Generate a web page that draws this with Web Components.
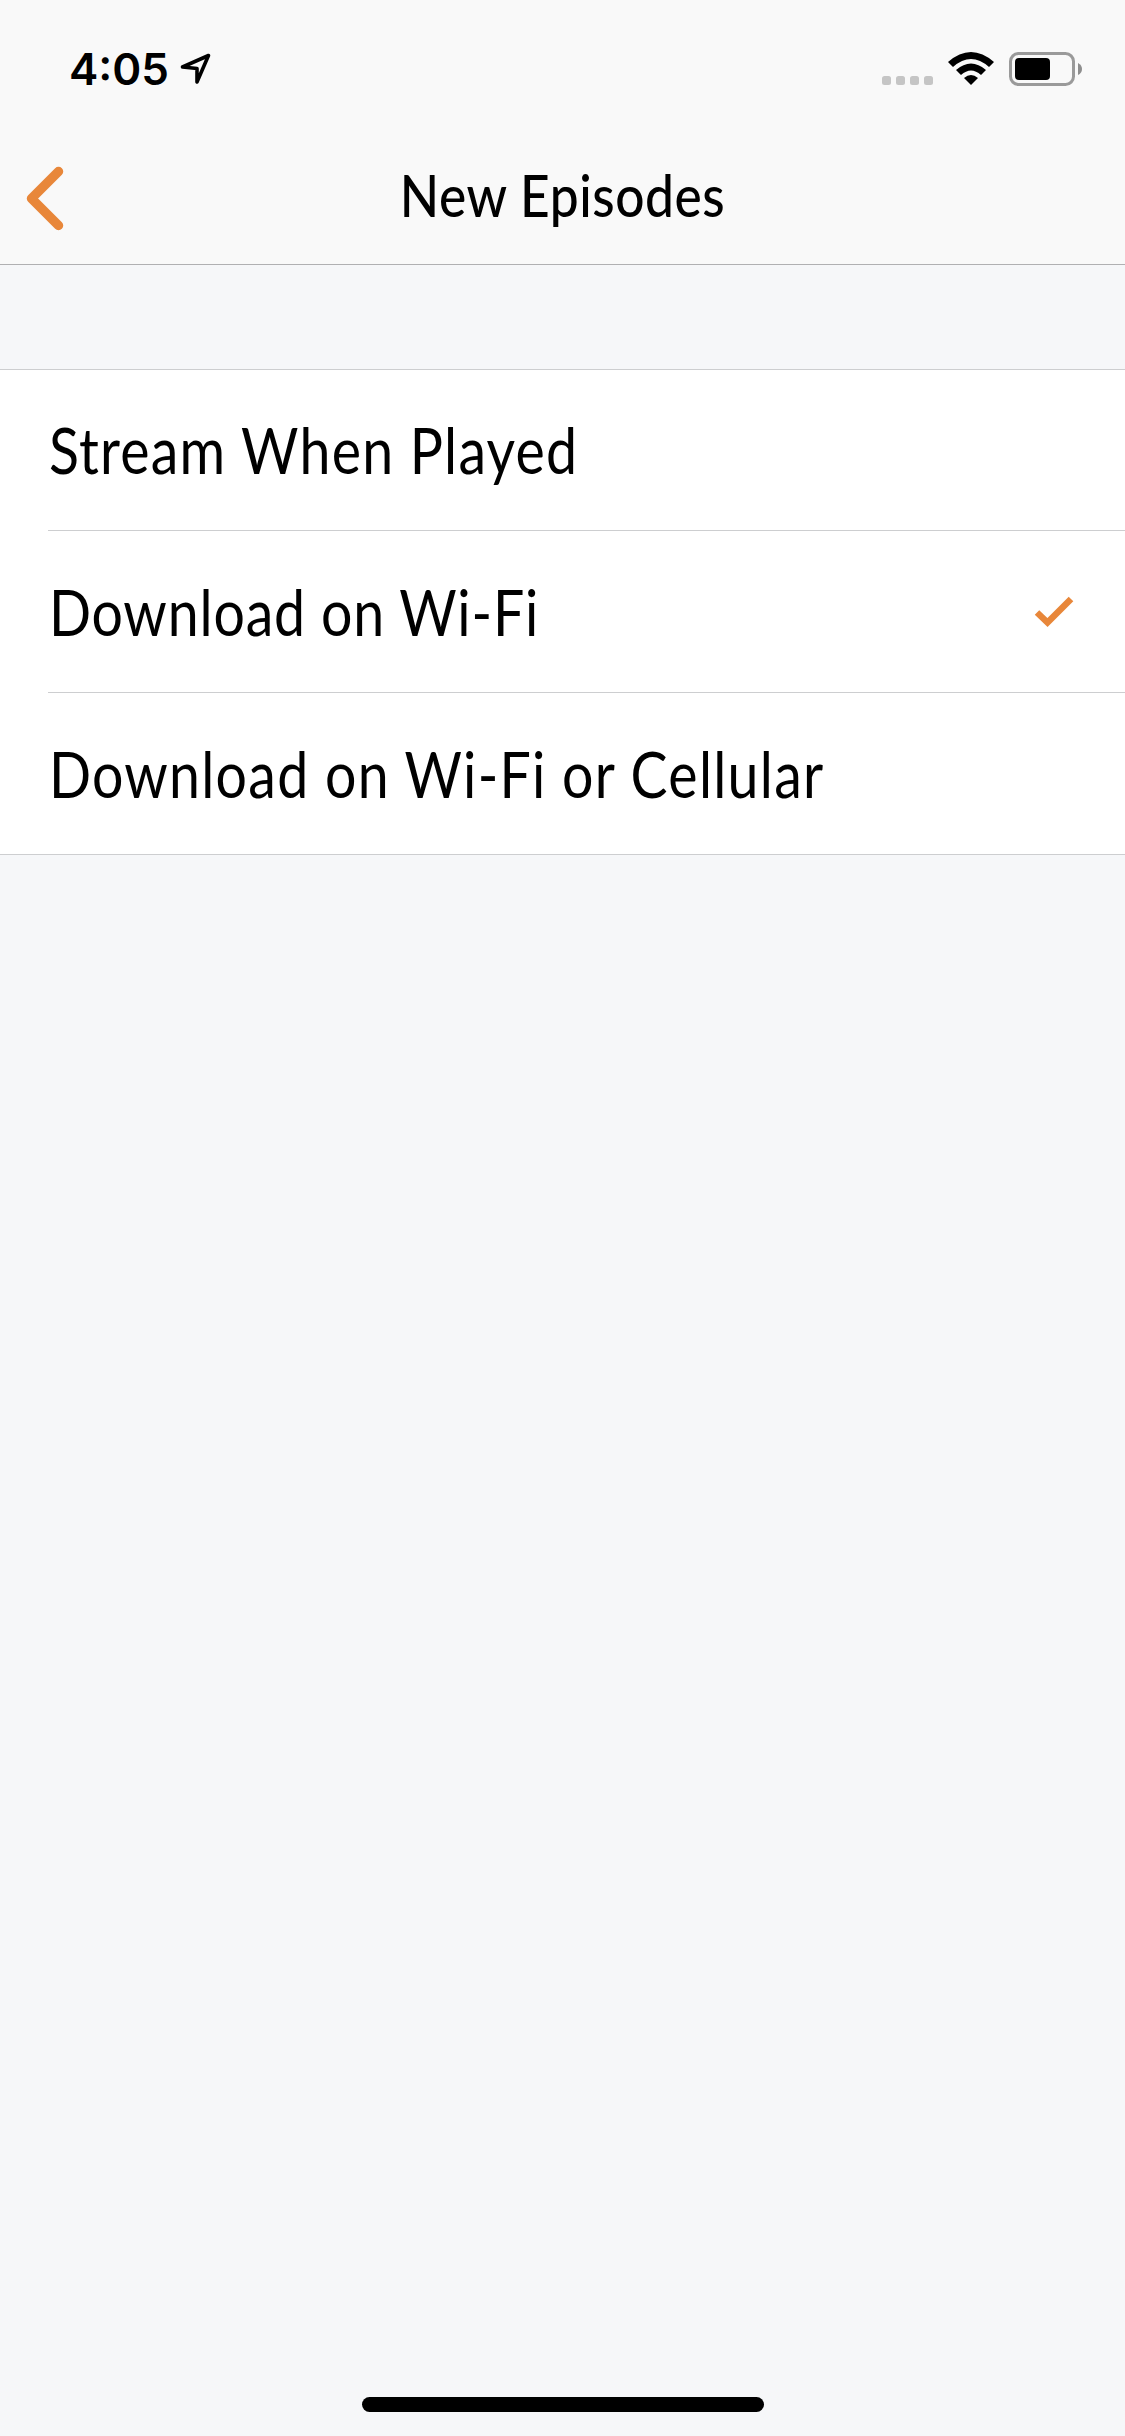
<!DOCTYPE html>
<html lang="en">
<head>
<meta charset="utf-8">
<title>New Episodes</title>
<style>
  html, body {
    margin: 0;
    height: 100%;
  }
  body {
    --tint: #e8873a;
    --hairline: #cdced0;
    font-family: Lato, "Open Sans", sans-serif;
    color: #000;
    background: #f6f7f9;
  }
</style>
</head>
<body>
<settings-screen>
  <status-bar slot="top" time="4:05"></status-bar>
  <nav-bar slot="top">New Episodes</nav-bar>
  <option-list>
    <option-row style="--tracking: 1.4px">Stream When Played</option-row>
    <option-row style="--tracking: .95px" checked>Download on Wi-Fi</option-row>
    <option-row style="--tracking: 1.45px">Download on Wi-Fi or Cellular</option-row>
  </option-list>
</settings-screen>

<script>
class BaseElement extends HTMLElement {
  constructor() {
    super();
    this.attachShadow({mode: 'open'});
    this.shadowRoot.innerHTML = this.constructor.markup;
  }
}

class SettingsScreen extends BaseElement {
  static get markup() {
    return `
      <style>
        :host {
          display: flex;
          flex-direction: column;
          height: 2436px;
          overflow: hidden;
        }
        header {
          box-sizing: border-box;
          height: 265px;
          background: #f9f9f9;
          border-bottom: 1px solid #b0b0b2;
        }
        main {
          flex: 1;
          padding-top: 104px;
        }
        footer {
          display: flex;
          justify-content: center;
          padding-bottom: 24px;
        }
        .home {
          width: 402px;
          height: 15px;
          border-radius: 8px;
          background: #000;
        }
      </style>
      <header><slot name="top"></slot></header>
      <main><slot></slot></main>
      <footer><div class="home"></div></footer>
    `;
  }
}

class StatusBar extends BaseElement {
  static get markup() {
    return `
      <style>
        :host {
          display: flex;
          justify-content: space-between;
          height: 132px;
        }
        svg { display: block; }
        .left {
          display: flex;
          padding: 42px 0 0 69px;
          gap: 13px;
        }
        .time {
          font: 600 44px/54px Inter, sans-serif;
          width: 98px;
          white-space: nowrap;
        }
        .right { padding: 35px 25px 0 0; }
      </style>
      <div class="left">
        <span class="time"></span>
        <svg width="34" height="34" viewBox="0 0 34 34" style="margin-top: 10px">
          <path d="M2.5 15 28.5 3.5 17 30V16.5Z" fill="none" stroke="#000" stroke-width="3.6" stroke-linejoin="round"/>
        </svg>
      </div>
      <div class="right">
        <svg width="230" height="70" viewBox="0 0 230 70">
          <g fill="#c5c5c5">
            <rect x="12" y="41" width="9" height="9" rx="2.5"/>
            <rect x="26" y="41" width="9" height="9" rx="2.5"/>
            <rect x="40" y="41" width="9" height="9" rx="2.5"/>
            <rect x="54" y="41" width="9" height="9" rx="2.5"/>
          </g>
          <path d="M78 27Q101 7 124 27L119 32Q101 16 83 32Z"/>
          <path d="M86 35Q101 22 116 35L111 40Q101 31 91 40Z"/>
          <path d="M94 43Q101 37 108 43L101 50Z"/>
          <rect x="140.5" y="18.5" width="63" height="31" rx="8" fill="none" stroke="#9a9a9a" stroke-width="3"/>
          <rect x="145" y="23" width="35" height="22" rx="4"/>
          <path d="M208 28Q212 30 212 34T208 40Z" fill="#8e8e8e"/>
        </svg>
      </div>
    `;
  }

  connectedCallback() {
    this.shadowRoot.querySelector('.time').textContent = this.getAttribute('time');
  }
}

class NavBar extends BaseElement {
  static get markup() {
    return `
      <style>
        :host {
          display: grid;
          grid-template-columns: 120px 1fr 120px;
          align-items: center;
          height: 132px;
        }
        .back {
          display: block;
          fill: none;
          stroke: var(--tint);
          stroke-width: 9.5;
          stroke-linecap: round;
          stroke-linejoin: round;
        }
        h1 {
          margin: 0;
          padding-bottom: 6px;
          font-size: 57px;
          font-weight: 500;
          line-height: 126px;
          text-align: center;
          white-space: nowrap;
          letter-spacing: .6px;
          transform: scaleX(.903);
        }
      </style>
      <svg class="back" width="120" height="132" viewBox="0 0 120 132">
        <path d="M58.5 39.5 31.5 66.5 58.5 93.5"/>
      </svg>
      <h1><slot></slot></h1>
    `;
  }
}

class OptionList extends BaseElement {
  static get markup() {
    return `
      <style>
        :host {
          display: block;
          background: #fff;
          border-top: 1px solid var(--hairline);
          border-bottom: 1px solid var(--hairline);
        }
      </style>
      <slot></slot>
    `;
  }
}

class OptionRow extends BaseElement {
  static get markup() {
    return `
      <style>
        :host {
          display: block;
          padding-left: 48px;
        }
        .row {
          box-sizing: border-box;
          display: flex;
          justify-content: space-between;
          align-items: center;
          height: 162px;
          padding-right: 50px;
          border-bottom: 1px solid var(--hairline);
        }
        :host(:first-child) .row { height: 161px; }
        :host(:last-child) .row {
          height: 161px;
          border-bottom: 0;
        }
        .label {
          padding-left: 1px;
          font-size: 63px;
          line-height: 160px;
          white-space: nowrap;
          letter-spacing: var(--tracking, 1px);
          transform: scaleX(.88);
          transform-origin: 0 50%;
        }
        .check {
          display: none;
          fill: none;
          stroke: var(--tint);
          stroke-width: 6.5;
        }
        :host([checked]) .check { display: block; }
      </style>
      <div class="row">
        <span class="label"><slot></slot></span>
        <svg class="check" width="42" height="34" viewBox="0 0 42 34">
          <path d="M4 17.5 14.5 27.5 38 4"/>
        </svg>
      </div>
    `;
  }
}

customElements.define('settings-screen', SettingsScreen);
customElements.define('status-bar', StatusBar);
customElements.define('nav-bar', NavBar);
customElements.define('option-list', OptionList);
customElements.define('option-row', OptionRow);
</script>
</body>
</html>
